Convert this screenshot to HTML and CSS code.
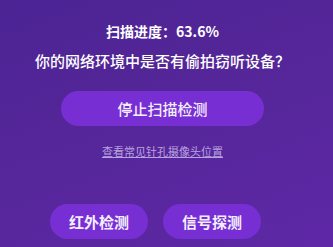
FILE: index.html
```html
<!DOCTYPE html>
<html lang="zh">
<head>
<meta charset="utf-8">
<link rel="stylesheet" href="styles.css">
</head>
<body>
<main class="scan">
  <div class="progress">扫描进度：63.6%</div>
  <div class="question">你的网络环境中是否有偷拍窃听设备？</div>
  <button class="btn btn-main">停止扫描检测</button>
  <a class="link" href="#">查看常见针孔摄像头位置</a>
  <div class="actions">
    <button class="btn btn-small">红外检测</button>
    <button class="btn btn-small">信号探测</button>
  </div>
</main>
</body>
</html>
```
FILE: styles.css
```css
html, body {
  margin: 0;
  padding: 0;
}
body {
  width: 333px;
  height: 247px;
  overflow: hidden;
  background: linear-gradient(160deg, #4c2494 0%, #552699 45%, #5e28a6 100%);
  font-family: "Noto Sans CJK SC", "Noto Sans", sans-serif;
  color: #ffffff;
}
.scan {
  display: flex;
  flex-direction: column;
  align-items: center;
  padding-right: 8px;
}
.progress {
  margin-top: 21px;
  font-size: 14px;
  line-height: 20px;
  font-weight: 700;
}
.question {
  margin-top: 9px;
  font-size: 15px;
  line-height: 22px;
  font-weight: 500;
}
.btn {
  border: none;
  background: #772fd4;
  color: #f4eefc;
  font-family: inherit;
  border-radius: 18px;
  height: 35px;
  padding: 0;
  cursor: pointer;
}
.btn-main {
  margin-top: 19px;
  width: 203px;
  font-size: 15px;
  font-weight: 500;
}
.link {
  margin-top: 17px;
  font-size: 11px;
  line-height: 16px;
  color: #b7a3df;
  text-decoration: underline;
}
.actions {
  margin-top: 45px;
  display: flex;
  gap: 15px;
  margin-right: 14px;
}
.btn-small {
  width: 98px;
  font-size: 15px;
  font-weight: 700;
}
```
